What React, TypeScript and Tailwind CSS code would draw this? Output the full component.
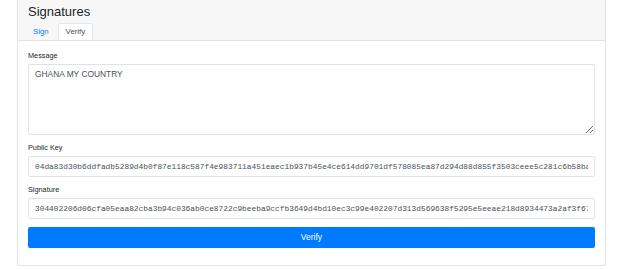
const PUBLIC_KEY =
  "04da83d30b6ddfadb5289d4b0f87e118c587f4e983711a451eaec1b937b45e4ce614dd9701df578085ea87d294d88d855f3503ceee5c281c6b58bae1f0";
const SIGNATURE =
  "304402206d06cfa05eaa82cba3b94c036ab0ce8722c9beeba9ccfb3649d4bd10ec3c99e402207d313d569638f5295e5eeae218d8934473a2af3f672c41e8";

const Field = ({ label, children }: { label: string; children: React.ReactNode }) => (
  <div className="mb-[8px]">
    <div className="text-[7.3px] leading-[9px] text-[#212529] mb-[4px]">{label}</div>
    {children}
  </div>
);

const inputCls =
  "block w-full h-[21px] border border-[#dfe3e8] rounded-[2px] bg-white px-[6px] text-[#495057] text-[7.85px] leading-[19px] outline-none font-['Liberation_Mono',monospace]";

export default function App() {
  return (
    <div className="w-[640px] h-[269px] bg-white font-['Liberation_Sans',Arial,sans-serif] overflow-hidden">
      <div className="ml-[17px] w-[589px] border border-t-0 border-[#e3e3e3] rounded-b-[3px]">
        <div className="bg-[#f7f7f7] border-b border-[#e3e3e3] px-[10px]">
          <div className="pt-[5px] text-[13px] leading-[13px] text-[#212529]">Signatures</div>
          <div className="mt-[5px] flex -ml-[4px]">
            <div className="h-[17px] px-[8px] flex items-center text-[7.8px] text-[#007bff] border border-transparent">
              Sign
            </div>
            <div className="h-[17px] px-[7px] flex items-center text-[7.8px] text-[#495057] bg-white border border-b-0 border-[#e3e6e9] rounded-t-[2px]">
              Verify
            </div>
          </div>
        </div>
        <div className="px-[10px] pt-[10px] pb-[17px]">
          <Field label="Message">
            <textarea
              defaultValue="GHANA MY COUNTRY"
              className="block w-full h-[71px] border border-[#dfe3e8] rounded-[2px] bg-white px-[6px] py-[3px] text-[#495057] text-[8.4px] leading-[12.2px] outline-none"
            />
          </Field>
          <Field label="Public Key">
            <input readOnly defaultValue={PUBLIC_KEY} className={inputCls} />
          </Field>
          <Field label="Signature">
            <input readOnly defaultValue={SIGNATURE} className={inputCls} />
          </Field>
          <button className="block w-full h-[21px] rounded-[2px] bg-[#007bff] text-white text-[8.5px] leading-[21px] text-center">
            Verify
          </button>
        </div>
      </div>
    </div>
  );
}
